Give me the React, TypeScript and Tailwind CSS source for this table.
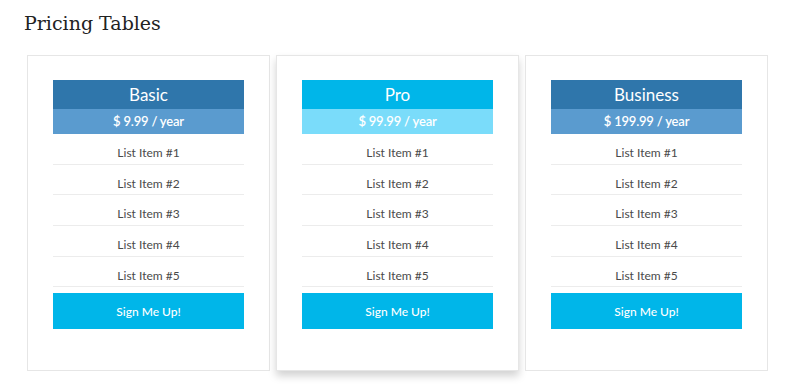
const PLANS = [
  { name: "Basic", price: "$ 9.99 / year", head: "bg-[#2f76ab]", sub: "bg-[#5a9bcf]", featured: false },
  { name: "Pro", price: "$ 99.99 / year", head: "bg-[#00b6e9]", sub: "bg-[#7adcfa]", featured: true },
  { name: "Business", price: "$ 199.99 / year", head: "bg-[#2f76ab]", sub: "bg-[#5a9bcf]", featured: false },
];

const ITEMS = ["List Item #1", "List Item #2", "List Item #3", "List Item #4", "List Item #5"];

function PlanCard({ plan }: { plan: (typeof PLANS)[number] }) {
  return (
    <div
      className={
        "flex w-[243px] flex-col border border-[#e6e6e6] bg-white px-[25px] pt-[24px] pb-[41px] " +
        (plan.featured ? "shadow-[0_5px_8px_rgba(0,0,0,0.18)]" : "")
      }
    >
      <div className={`flex h-[29px] items-center justify-center pt-[1px] text-[17px] text-white ${plan.head}`}>
        {plan.name}
      </div>
      <div
        className={`flex h-[25px] items-center justify-center text-[13px] font-semibold tracking-[-0.2px] text-white ${plan.sub}`}
      >
        {plan.price}
      </div>
      <ul>
        {ITEMS.map((item) => (
          <li
            key={item}
            className="flex h-[30.7px] items-center justify-center border-b border-[#ececec] pt-[8px] text-[12px] text-[#4a4a4a]"
          >
            {item}
          </li>
        ))}
      </ul>
      <button className="mt-[6px] h-[36px] w-full bg-[#00b6e9] pt-[1px] text-[12px] font-medium text-white">
        Sign Me Up!
      </button>
    </div>
  );
}

export default function App() {
  return (
    <div className="h-[390px] w-[800px] bg-white font-['Lato',sans-serif]">
      <h1 className="pl-[24px] pt-[8px] font-['DejaVu_Serif',serif] text-[19px] leading-[30px] text-[#222]">
        Pricing Tables
      </h1>
      <div className="mt-[17px] flex gap-[6px] pl-[27px]">
        {PLANS.map((plan) => (
          <PlanCard key={plan.name} plan={plan} />
        ))}
      </div>
    </div>
  );
}
